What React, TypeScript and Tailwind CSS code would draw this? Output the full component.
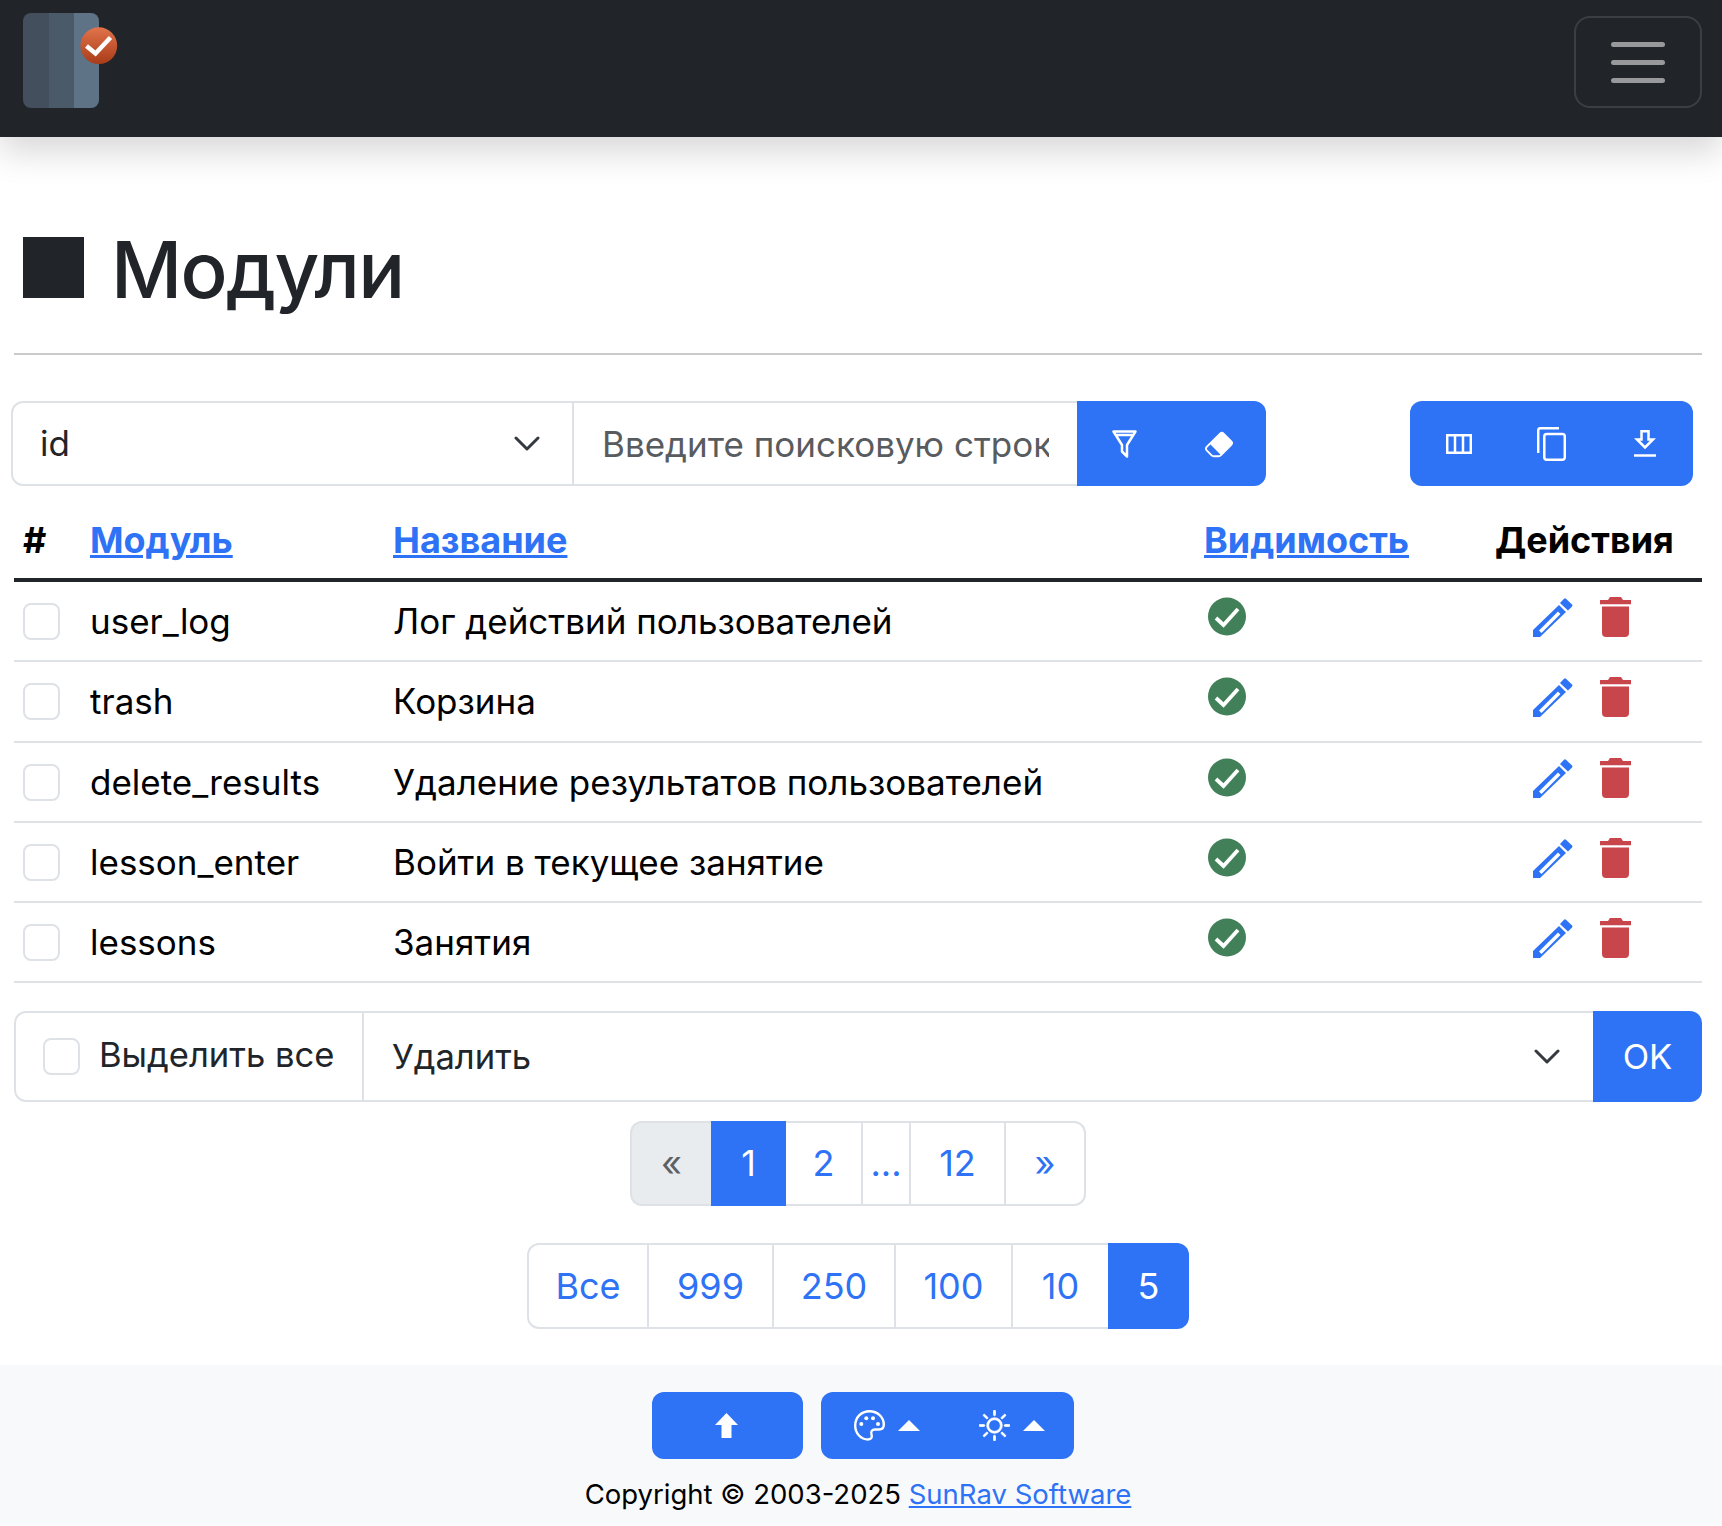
import { BsEraserFill, BsSun } from "react-icons/bs";

const rows = [
  { id: "user_log", title: "Лог действий пользователей" },
  { id: "trash", title: "Корзина" },
  { id: "delete_results", title: "Удаление результатов пользователей" },
  { id: "lesson_enter", title: "Войти в текущее занятие" },
  { id: "lessons", title: "Занятия" },
];

const pages = [
  { label: "«", cls: "w-[81px] rounded-l-[12px] border-2 border-r-0 border-[#dee2e6] bg-[#e9ecef] text-[#5c6166]" },
  { label: "1", cls: "w-[75px] bg-[#2e72f5] text-white" },
  { label: "2", cls: "w-[77px] border-y-2 border-r-2 border-[#dee2e6] text-[#2e72f5]" },
  { label: "...", cls: "w-[48px] border-y-2 border-r-2 border-[#dee2e6] text-[#2e72f5]" },
  { label: "12", cls: "w-[95px] border-y-2 border-r-2 border-[#dee2e6] text-[#2e72f5]" },
  { label: "»", cls: "w-[80px] rounded-r-[12px] border-y-2 border-r-2 border-[#dee2e6] text-[#2e72f5]" },
];

const sizes = [
  { label: "Все", cls: "w-[122px] rounded-l-[12px] border-2 border-[#dee2e6] text-[#2e72f5]" },
  { label: "999", cls: "w-[125px] border-y-2 border-r-2 border-[#dee2e6] text-[#2e72f5]" },
  { label: "250", cls: "w-[122px] border-y-2 border-r-2 border-[#dee2e6] text-[#2e72f5]" },
  { label: "100", cls: "w-[117px] border-y-2 border-r-2 border-[#dee2e6] text-[#2e72f5]" },
  { label: "10", cls: "w-[95px] border-y-2 border-[#dee2e6] text-[#2e72f5]" },
  { label: "5", cls: "w-[81px] rounded-r-[12px] bg-[#2e72f5] text-white" },
];

function Logo() {
  return (
    <svg width="95" height="96" viewBox="0 0 95 96" className="mt-[13px] block">
      <defs>
        <linearGradient id="badge" x1="0" y1="0" x2="0" y2="1">
          <stop offset="0" stopColor="#e2734b" />
          <stop offset="1" stopColor="#a83c18" />
        </linearGradient>
        <clipPath id="book">
          <rect width="76" height="95" rx="8" />
        </clipPath>
      </defs>
      <g clipPath="url(#book)">
        <rect width="26" height="95" fill="#434f5d" />
        <rect x="26" width="25" height="95" fill="#4a5a69" />
        <rect x="51" width="25" height="95" fill="#5f7387" />
      </g>
      <circle cx="75.800" cy="32.700" r="18.400" fill="url(#badge)" />
      <path d="M63.500 33l9 7.500L87.500 24.500" fill="none" stroke="#fff" strokeWidth="4.500" />
    </svg>
  );
}

function Chevron() {
  return (
    <svg width="26" height="15" viewBox="0 0 26 15" fill="none" stroke="#343a40" strokeWidth="3" strokeLinecap="round" strokeLinejoin="round">
      <path d="M2 2l11 11L24 2" />
    </svg>
  );
}

function Checkbox() {
  return <span className="block h-[37px] w-[37px] shrink-0 rounded-[8px] border-2 border-[#dee2e6] bg-white" />;
}

function CheckIcon() {
  return (
    <svg width="38" height="39" viewBox="0 0 38 39" className="block">
      <circle cx="19" cy="19.500" r="19" fill="#428059" />
      <path d="M8 21l7.500 7L30 12" fill="none" stroke="#fff" strokeWidth="3.800" />
    </svg>
  );
}

function PencilIcon() {
  return (
    <svg width="40" height="40" viewBox="0 0 40 40" className="block">
      <path
        fillRule="evenodd"
        fill="#2e72f5"
        d="M0 33L26 8l7 7L7 40H0zM6 33.500l2.500 2.500 19-19-2.500-2.500z"
      />
      <path fill="#2e72f5" d="M27 6l4-4.200a1.500 1.500 0 0 1 2 0l6 5.700a1.500 1.500 0 0 1 0 2L35 13.500z" />
    </svg>
  );
}

function TrashIcon() {
  return (
    <svg width="31" height="40" viewBox="0 0 31 40" className="block">
      <path fill="#c9454c" d="M0 3h8l2-3h11l2 3h8v4.300H0zM2 9.500h27V36a4 4 0 0 1-4 4H6a4 4 0 0 1-4-4z" />
    </svg>
  );
}

function FunnelIcon() {
  return (
    <svg width="25" height="28" viewBox="0 0 25 28" fill="none" stroke="#fff" strokeWidth="2.500" strokeLinejoin="round">
      <path d="M1.500 1.500h22L15 15v11.500l-5-5V15zM4 5h17" />
    </svg>
  );
}

function ColumnsIcon() {
  return (
    <svg width="26" height="20" viewBox="0 0 26 20" fill="none" stroke="#fff" strokeWidth="2.500">
      <path d="M1.200 1.200h23.600v17.600H1.200zM9 1.200v17.600M17 1.200v17.600" />
    </svg>
  );
}

function CopyIcon() {
  return (
    <svg width="29" height="34" viewBox="0 0 29 34" fill="none" stroke="#fff" strokeWidth="2.500">
      <path d="M1.200 26V3.500a2.300 2.300 0 0 1 2.300-2.300H22" />
      <rect x="7.300" y="7" width="20.500" height="25.800" rx="2.500" />
    </svg>
  );
}

function DownloadIcon() {
  return (
    <svg width="22" height="27" viewBox="0 0 22 27" fill="none" stroke="#fff" strokeWidth="2.500">
      <path d="M7.500 1.200h7v8.300h4.500L11 17.500 3 9.500h4.500z" />
      <path d="M0 25.500h22" />
    </svg>
  );
}

function UpArrow() {
  return (
    <svg width="23" height="25" viewBox="0 0 23 25" fill="#fff">
      <path d="M11.500 0L23 12h-6.500v13h-10V12H0z" />
    </svg>
  );
}

function PaletteIcon() {
  return (
    <svg width="31" height="31" viewBox="0 0 31 31" fill="none">
      <path
        stroke="#fff"
        strokeWidth="2.400"
        d="M15.500 1.200C7 1.200 1.200 7.500 1.200 15.500 1.200 23.500 7 29.500 14 29.500c3.500 0 4.500-2.500 3.500-5-1-3 .5-5 3.500-5h4c3 0 4.800-2 4.800-5C29.800 7 23.500 1.200 15.500 1.200z"
      />
      <circle cx="7.300" cy="14" r="2" fill="#fff" />
      <circle cx="12.300" cy="8.300" r="2" fill="#fff" />
      <circle cx="19" cy="8.300" r="2" fill="#fff" />
      <circle cx="24" cy="14" r="2" fill="#fff" />
    </svg>
  );
}

function Caret() {
  return (
    <svg width="22" height="11" viewBox="0 0 22 11" fill="#fff">
      <path d="M11 0l11 11H0z" />
    </svg>
  );
}

export default function App() {
  return (
    <div className="w-full bg-white font-[Inter,'Noto_Sans',sans-serif] text-[35px] leading-[47px] text-black">
      <nav className="relative z-10 flex h-[137px] items-start justify-between bg-[#212529] pl-[23px] pr-[20px] shadow-[0_16px_31px_rgba(0,0,0,0.15)]">
        <Logo />
        <button className="mt-[16px] flex h-[92px] w-[128px] flex-col items-center justify-center gap-[13px] rounded-[16px] border-2 border-[#3b3f43]">
          <span className="h-[5px] w-[54px] rounded-full bg-[#97999b]" />
          <span className="h-[5px] w-[54px] rounded-full bg-[#97999b]" />
          <span className="h-[5px] w-[54px] rounded-full bg-[#97999b]" />
        </button>
      </nav>

      <main className="pl-[14px] pr-[20px]">
        <div className="pt-[86px]">
          <h1 className="flex h-[94px] items-center gap-[32px] pl-[9px] text-[78px] font-medium leading-[94px] tracking-[-1.600px] text-[#212529]">
            <span className="mt-[-5px] block h-[61px] w-[61px] bg-[#212529]" />
            <span className="ml-[-5px]">Модули</span>
          </h1>
          <hr className="mt-[36px] border-t-2 border-[#c9cacb]" />
        </div>

        <div className="ml-[-3px] mt-[46px] flex justify-between pr-[9px]">
          <div className="flex h-[85px] w-[1255px]">
            <div className="flex w-[563px] items-center justify-between rounded-l-[12px] border-2 border-[#dee2e6] pl-[27px] pr-[32px] text-[#212529]">
              <span>id</span>
              <Chevron />
            </div>
            <input
              readOnly
              placeholder="Введите поисковую строку"
              className="w-[503px] border-y-2 border-r-0 border-[#dee2e6] px-[28px] pt-[2px] text-[35px] outline-none placeholder:text-[#595c5f]"
            />
            <div className="flex w-[189px] rounded-r-[12px] bg-[#2e72f5] text-white">
              <span className="flex flex-1 items-center justify-center"><FunnelIcon /></span>
              <span className="flex flex-1 items-center justify-center"><BsEraserFill size={30} /></span>
            </div>
          </div>
          <div className="flex h-[85px] w-[283px] rounded-[12px] bg-[#2e72f5]">
            <span className="flex flex-1 items-center justify-center pl-[2px]"><ColumnsIcon /></span>
            <span className="flex flex-1 items-center justify-center"><CopyIcon /></span>
            <span className="flex flex-1 items-center justify-center pr-[2px]"><DownloadIcon /></span>
          </div>
        </div>

        <div className="mt-[16px] grid h-[80px] grid-cols-[67px_303px_811px_293px_1fr] items-center border-b-4 border-[#212529] pt-[1px] text-[36px] font-bold">
          <span className="pl-[9px]">#</span>
          <a className="pl-[9px] text-[#2e72f5] underline">Модуль</a>
          <a className="pl-[9px] text-[#2e72f5] underline">Название</a>
          <a className="pl-[9px] text-[#2e72f5] underline">Видимость</a>
          <span className="pl-[7px]">Действия</span>
        </div>
        {rows.map((row) => (
          <div
            key={row.id}
            className="grid h-[80.300px] grid-cols-[67px_303px_811px_293px_1fr] border-b-2 border-[#dee2e6] pt-[15px]"
          >
            <span className="pl-[9px] pt-[6px]"><Checkbox /></span>
            <span className="pl-[9px] pt-[1px]">{row.id}</span>
            <span className="pl-[9px] pt-[1px]">{row.title}</span>
            <span className="pl-[13px]"><CheckIcon /></span>
            <span className="flex gap-[27px] pl-[45px]">
              <PencilIcon />
              <TrashIcon />
            </span>
          </div>
        ))}

        <div className="mt-[28px] flex h-[91px] text-[34.600px]">
          <div className="flex w-[350px] items-center gap-[19px] rounded-l-[12px] border-2 border-[#dee2e6] pl-[27px] text-[#212529]">
            <Checkbox />
            <span className="mt-[-4px]">Выделить все</span>
          </div>
          <div className="flex flex-1 items-center justify-between border-y-2 border-r-0 border-[#dee2e6] pl-[28px] pr-[33px] text-[#212529]">
            <span>Удалить</span>
            <Chevron />
          </div>
          <div className="flex w-[109px] items-center justify-center rounded-r-[12px] bg-[#2e72f5] text-white">OK</div>
        </div>

        <div className="mt-[19px] flex justify-center">
          <div className="flex h-[85px] text-[36px]">
            {pages.map((p) => (
              <span key={p.label} className={`flex items-center justify-center ${p.cls}`}>{p.label}</span>
            ))}
          </div>
        </div>

        <div className="mt-[37px] flex justify-center">
          <div className="flex h-[86px] text-[36px]">
            {sizes.map((s) => (
              <span key={s.label} className={`flex items-center justify-center ${s.cls}`}>{s.label}</span>
            ))}
          </div>
        </div>
      </main>

      <footer className="mt-[36px] h-[160px] bg-[#f8f9fa] pt-[27px] text-center text-[27.500px] leading-[41px]">
        <div className="flex justify-center gap-[18px] pl-[4px]">
          <span className="flex h-[67px] w-[151px] items-center justify-center rounded-[12px] bg-[#2e72f5] pr-[2px]">
            <UpArrow />
          </span>
          <span className="flex h-[67px] w-[253px] rounded-[12px] bg-[#2e72f5] text-white">
            <span className="flex flex-1 items-center justify-center gap-[13px] pl-[4px]"><PaletteIcon /><Caret /></span>
            <span className="flex flex-1 items-center justify-center gap-[13px]"><BsSun size={31} stroke="currentColor" strokeWidth={0.4} /><Caret /></span>
          </span>
        </div>
        <p className="mt-[15px] pr-[6px]">
          Copyright © 2003-2025 <a className="text-[#2e72f5] underline">SunRav Software</a>
        </p>
      </footer>
    </div>
  );
}
